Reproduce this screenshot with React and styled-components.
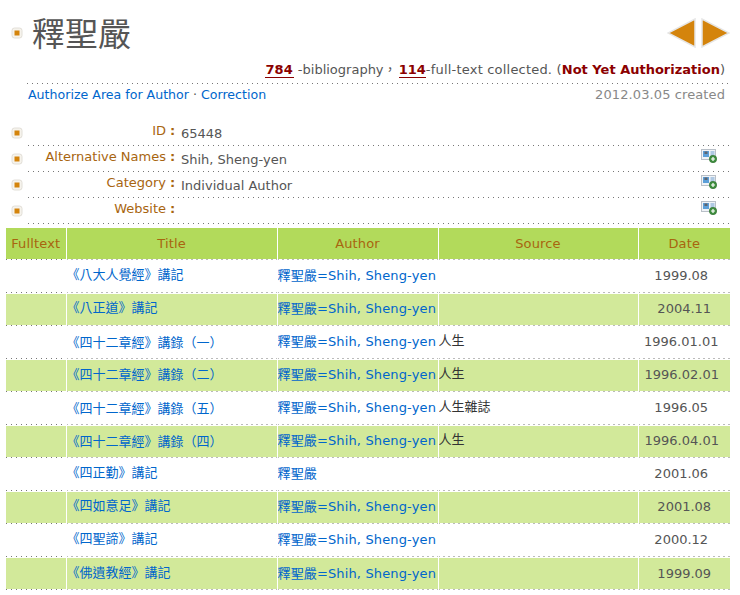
import styled, { createGlobalStyle, css } from 'styled-components';

const dotLine = 'linear-gradient(to right, #777 1px, transparent 1px)';

const dotsBottom = css`
  background-image: ${dotLine};
  background-size: 5px 1px;
  background-position: left bottom;
  background-repeat: repeat-x;
`;

const GlobalStyle = createGlobalStyle`
  html, body {
    margin: 0;
    padding: 0;
    background: #fff;
  }
  body {
    font-family: "DejaVu Sans", "Noto Sans CJK TC", sans-serif;
    font-size: 13px;
    color: #555;
  }
`;

const Page = styled.div`
  width: 740px;
  height: 595px;
  overflow: hidden;
  box-sizing: border-box;
  padding: 15px 10px 0 6px;
`;

const Head = styled.div`
  display: flex;
  align-items: center;
  height: 36px;
  padding-left: 5px;
`;

const Name = styled.h1`
  flex: 1;
  margin: -3px 0 0 9px;
  font-family: "Noto Sans CJK TC", serif;
  font-size: 33px;
  font-weight: 400;
  line-height: 36px;
  color: #555;
`;

const Arrows = styled.div`
  display: flex;
  gap: 3px;
`;

const Stats = styled.div`
  height: 33px;
  margin-left: 21px;
  padding: 10px 5px 0 0;
  box-sizing: border-box;
  text-align: right;
  line-height: 17px;
  ${dotsBottom}
`;

const Count = styled.b`
  color: #8b0000;
  border-bottom: 1px solid #8b0000;
  padding: 0 ${p => (p.$tight ? 0 : 1)}px;
  margin-left: ${p => (p.$tight ? -2 : 0)}px;
`;

const Spaced = styled.span`
  letter-spacing: 0.2px;
`;

const Warn = styled.b`
  color: #8b0000;
  letter-spacing: 0;
`;

const LinkRow = styled.div`
  display: flex;
  justify-content: space-between;
  align-items: center;
  height: 21px;
  margin: 0 5px 0 22px;
`;

const LinkGroup = styled.span`
  font-size: 12.6px;
`;

const Link = styled.a`
  color: #0066cc;
  text-decoration: none;
`;

const Created = styled.span`
  color: #888;
  letter-spacing: 0.1px;
`;

const Meta = styled.div`
  margin-top: 15px;
`;

const MetaRow = styled.div`
  display: flex;
  align-items: center;
  height: 26px;
  padding-left: 5px;
`;

const MetaBody = styled.div`
  flex: 1;
  display: flex;
  align-items: center;
  height: 26px;
  box-sizing: border-box;
  margin-left: 5px;
  ${dotsBottom}
`;

const MetaLabel = styled.span`
  width: 138px;
  text-align: right;
  color: #a8650f;
  position: relative;
  top: -3px;
  white-space: nowrap;
`;

const Colon = styled.span`
  width: 6px;
  margin-left: 4px;
  color: #a8650f;
  font-weight: 700;
  position: relative;
  top: -3px;
`;

const MetaValue = styled.span`
  flex: 1;
  margin-left: 5px;
  color: #555;
`;

const AddButton = styled.span`
  display: flex;
  margin-right: 13px;
  margin-top: -6px;
`;

const Table = styled.table`
  width: 724px;
  margin-top: 4px;
  border-collapse: collapse;
  table-layout: fixed;
`;

const Th = styled.th`
  height: 31px;
  padding: 0;
  background: #b2da5b;
  color: #a8650f;
  font-weight: 400;
  letter-spacing: 0.15px;
  border-left: 1px solid #fff;
  &:first-child { border-left: 0; }
`;

const rowFill = p =>
  p.$alt
    ? ', linear-gradient(#d2e99a, #d2e99a) 0 2px / 100% 31px no-repeat'
    : '';

const Td = styled.td`
  padding: 0;
  height: 33px;
  white-space: nowrap;
  overflow: hidden;
  background: ${dotLine} 0 0 / 5px 1px repeat-x${rowFill};
  tr:last-child & {
    height: 34px;
    background: ${dotLine} 0 0 / 5px 1px repeat-x,
      ${dotLine} 0 33px / 5px 1px repeat-x${rowFill};
  }
`;

const Divider = styled(Td)`
  border-left: 1px solid ${p => (p.$alt ? '#fff' : 'transparent')};
`;

const TitleCell = styled(Divider)`
  color: #0066cc;
`;

const Lifted = styled.span`
  position: relative;
  top: ${p => p.$top}px;
`;

const SourceText = styled(Lifted)`
  color: #333;
`;

const AuthorCell = styled(Divider)`
  color: #0066cc;
  letter-spacing: 0.14px;
  padding-bottom: 2px;
  box-sizing: border-box;
`;

const DateCell = styled(Divider)`
  text-align: center;
  color: #555;
  padding-right: ${p => p.$pad}px;
  box-sizing: border-box;
`;

const Bullet = () => (
  <svg width="12" height="12" viewBox="0 0 12 12" style={{ flexShrink: 0 }}>
    <rect x="1" y="1" width="10" height="10" rx="2.5" fill="#f6f3ec" stroke="#e2dfd8" />
    <rect x="3.5" y="3.5" width="5" height="5" fill="#d4840c" />
  </svg>
);

const Triangle = ({ flip }) => (
  <svg width="30" height="30" viewBox="0 0 30 30">
    <polygon
      points={flip ? '28,1 28,29 1,15' : '2,1 2,29 29,15'}
      fill="#d4840c"
      stroke="#e6e6e6"
      strokeWidth="1.5"
    />
  </svg>
);

const AddIcon = () => (
  <svg width="16" height="14" viewBox="0 0 16 14">
    <rect x="0.5" y="0.5" width="14" height="10" fill="#f0f3f7" stroke="#b9c0c8" />
    <rect x="2" y="2" width="6" height="6" fill="#5c9fd8" />
    <rect x="3.5" y="2.5" width="3" height="2.5" fill="#5c6570" />
    <path d="M9.5 3h4M9.5 5h4M9.5 7h2" stroke="#6f9fcf" strokeWidth="1" />
    <circle cx="12" cy="10" r="3.7" fill="#3f8f3f" stroke="#2c6b2c" strokeWidth="0.6" />
    <path d="M12 8v4M10 10h4" stroke="#fff" strokeWidth="1.2" />
  </svg>
);

const metaRows = [
  { label: 'ID', value: '65448' },
  { label: 'Alternative Names', value: 'Shih, Sheng-yen', add: true },
  { label: 'Category', value: 'Individual Author', add: true },
  { label: 'Website', value: '', add: true },
];

const author = '釋聖嚴=Shih, Sheng-yen';

const rows = [
  { title: '《八大人覺經》講記', author, source: '', date: '1999.08', pad: 6, top: -2 },
  { title: '《八正道》講記', author, source: '', date: '2004.11', pad: 0, top: -2 },
  { title: '《四十二章經》講錄（一）', author, source: '人生', date: '1996.01.01', pad: 6, top: 0 },
  { title: '《四十二章經》講錄（二）', author, source: '人生', date: '1996.02.01', pad: 5, top: -1 },
  { title: '《四十二章經》講錄（五）', author, source: '人生雜誌', date: '1996.05', pad: 6, top: 0 },
  { title: '《四十二章經》講錄（四）', author, source: '人生', date: '1996.04.01', pad: 5, top: 0 },
  { title: '《四正勤》講記', author: '釋聖嚴', source: '', date: '2001.06', pad: 6, top: -2 },
  { title: '《四如意足》講記', author, source: '', date: '2001.08', pad: 0, top: -2 },
  { title: '《四聖諦》講記', author, source: '', date: '2000.12', pad: 6, top: -2 },
  { title: '《佛遺教經》講記', author, source: '', date: '1999.09', pad: 0, top: -2 },
];

export default function App() {
  return (
    <Page>
      <GlobalStyle />
      <Head>
        <Bullet />
        <Name>釋聖嚴</Name>
        <Arrows>
          <Triangle flip />
          <Triangle />
        </Arrows>
      </Head>
      <Stats>
        <Count>784</Count> -bibliography， <Count $tight>114</Count>
        <Spaced>-full-text collected. (</Spaced>
        <Warn>Not Yet Authorization</Warn>)
      </Stats>
      <LinkRow>
        <LinkGroup>
          <Link href="#">Authorize Area for Author</Link> · <Link href="#">Correction</Link>
        </LinkGroup>
        <Created>2012.03.05 created</Created>
      </LinkRow>
      <Meta>
        {metaRows.map(m => (
          <MetaRow key={m.label}>
            <Bullet />
            <MetaBody>
              <MetaLabel>{m.label}</MetaLabel>
              <Colon>:</Colon>
              <MetaValue>{m.value}</MetaValue>
              {m.add && (
                <AddButton>
                  <AddIcon />
                </AddButton>
              )}
            </MetaBody>
          </MetaRow>
        ))}
      </Meta>
      <Table>
        <colgroup>
          <col style={{ width: 60 }} />
          <col style={{ width: 211 }} />
          <col style={{ width: 161 }} />
          <col style={{ width: 200 }} />
          <col style={{ width: 92 }} />
        </colgroup>
        <thead>
          <tr>
            <Th>Fulltext</Th>
            <Th>Title</Th>
            <Th>Author</Th>
            <Th>Source</Th>
            <Th>Date</Th>
          </tr>
        </thead>
        <tbody>
          {rows.map((r, i) => {
            const alt = i % 2 === 1;
            return (
              <tr key={r.title}>
                <Td $alt={alt} />
                <TitleCell $alt={alt}>
                  <Lifted $top={r.top}>{r.title}</Lifted>
                </TitleCell>
                <AuthorCell $alt={alt}>{r.author}</AuthorCell>
                <Divider $alt={alt}>
                  <SourceText $top={-2}>{r.source}</SourceText>
                </Divider>
                <DateCell $alt={alt} $pad={r.pad}>{r.date}</DateCell>
              </tr>
            );
          })}
        </tbody>
      </Table>
    </Page>
  );
}
